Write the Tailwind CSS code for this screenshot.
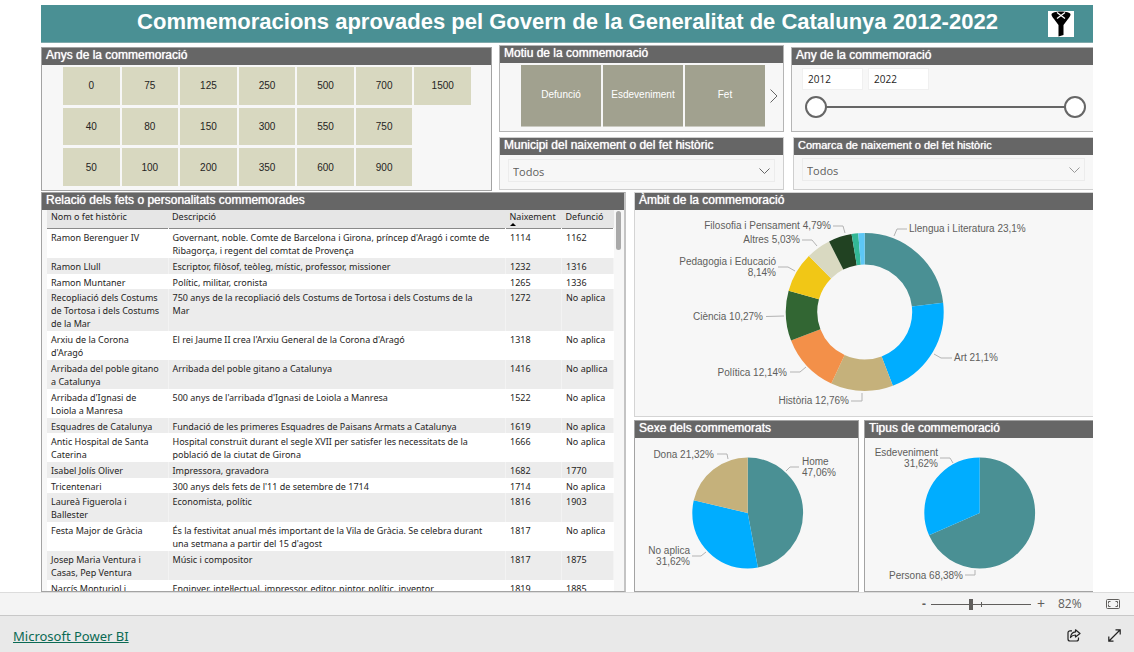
<!DOCTYPE html>
<html lang="ca">
<head>
<meta charset="utf-8">
<meta name="viewport" content="width=device-width, initial-scale=1">
<title>Commemoracions aprovades pel Govern de la Generalitat de Catalunya</title>
<script src="https://cdn.jsdelivr.net/npm/@tailwindcss/browser@4"></script>
</head>
<body class="bg-white font-['Liberation_Sans',Arial,sans-serif] text-[#252423]">
<div class="flex h-screen flex-col [&_h2]:[text-shadow:0_0_1px_#fff]">

  <main class="flex min-h-0 flex-1 flex-col px-[41px] pt-[5px]">
    <header class="flex h-[38px] shrink-0 items-center border-b border-[#7fa9ab] bg-[#4a9094] pr-[19px]">
      <h1 class="flex-1 pb-[3px] pl-[46px] text-center text-[22px] leading-[26px] font-bold whitespace-nowrap text-white">Commemoracions aprovades pel Govern de la Generalitat de Catalunya 2012-2022</h1>
      <button type="button" aria-label="Esborra els filtres" class="size-[26px] bg-white">
        <svg viewBox="0 0 26 26" class="size-full">
          <path d="M3.500 3.500C3.500 1.500 8 .5 13 .5s9.500 1 9.500 3c0 1.500-1 2.500-2.500 4.500l-4.500 6V24l-5 1.500V14L6 8C4.500 6 3.500 5 3.500 3.500Z" fill="#000"/>
          <path d="m9 1.500 8 6M17 1.500l-8 6" stroke="#fff" stroke-width="1.200"/>
        </svg>
      </button>
    </header>

    <div class="mt-[2px] grid shrink-0 grid-cols-[451fr_285fr_302fr] gap-x-[7px]">
      <section class="mt-[2px] flex h-[144px] flex-col border border-[#a3a3a3] bg-[#f7f7f7]">
        <h2 class="h-[17px] shrink-0 bg-[#666] pl-[4px] text-[12px] leading-[15px] text-white">Anys de la commemoració</h2>
        <div class="mt-[2px] mr-[20px] mb-[4px] ml-[21px] grid flex-1 grid-flow-col grid-cols-7 grid-rows-3 gap-x-[2px] gap-y-[3px] text-[10px] [&>button]:bg-[#d8d8c0]">
          <button type="button">0</button><button type="button">40</button><button type="button">50</button>
          <button type="button">75</button><button type="button">80</button><button type="button">100</button>
          <button type="button">125</button><button type="button">150</button><button type="button">200</button>
          <button type="button">250</button><button type="button">300</button><button type="button">350</button>
          <button type="button">500</button><button type="button">550</button><button type="button">600</button>
          <button type="button">700</button><button type="button">750</button><button type="button">900</button>
          <button type="button">1500</button>
        </div>
      </section>

      <div class="flex flex-col gap-[5px]">
        <section class="flex h-[87px] flex-col border border-[#b5b5b5] bg-[#f7f7f7]">
          <h2 class="h-[17px] shrink-0 bg-[#666] pl-[4px] text-[12px] leading-[15px] text-white">Motiu de la commemoració</h2>
          <div class="flex flex-1 items-stretch pt-[2px] pb-[4px] pl-[21px]">
            <div class="grid flex-1 grid-cols-3 gap-x-[2px] text-[10px] text-white [text-shadow:0_0_1px_#fff] [&>button]:border-b [&>button]:border-[#c9c9c0] [&>button]:bg-[#a1a18f] [&>button]:pb-[2px]">
              <button type="button">Defunció</button><button type="button">Esdeveniment</button><button type="button">Fet</button>
            </div>
            <button type="button" aria-label="Següent" class="flex w-[18px] items-center justify-center">
              <svg viewBox="0 0 8 14" class="h-[14px] w-[8px]" fill="none" stroke="#666"><path d="m.5.5 6.500 6.500-6.500 6.500"/></svg>
            </button>
          </div>
        </section>
        <section class="flex h-[53px] flex-col border border-[#cfcfcf] bg-[#f7f7f7]">
          <h2 class="h-[17px] shrink-0 bg-[#666] pl-[4px] text-[12px] leading-[15px] text-white"><label for="municipi">Municipi del naixement o del fet històric</label></h2>
          <div class="relative mt-[4px] mr-[8px] ml-[8px]">
            <select id="municipi" class="block h-[23px] w-full appearance-none border border-[#ececec] bg-[#f7f7f7] pt-[3px] pl-[4px] font-['Open_Sans','Noto_Sans',sans-serif] text-[11px] text-[#605e5c]"><option>Todos</option></select>
            <svg viewBox="0 0 11 6" class="pointer-events-none absolute top-[9px] right-[5px] h-[6px] w-[11px]" fill="none" stroke="#666"><path d="m.5.500 5 5 5-5"/></svg>
          </div>
        </section>
      </div>

      <div class="flex flex-col gap-[5px] pt-[2px]">
        <section class="flex h-[85px] flex-col border border-r-0 border-[#b5b5b5] bg-[#f7f7f7]">
          <h2 class="h-[17px] shrink-0 bg-[#666] pl-[4px] text-[12px] leading-[15px] text-white">Any de la commemoració</h2>
          <div class="flex gap-[5px] pt-[3px] pl-[10px] font-['Open_Sans','Noto_Sans',sans-serif] text-[10px]">
            <input type="text" aria-label="Any inicial" value="2012" class="h-[22px] w-[61px] border border-[#f0f0f0] bg-white pl-[5px]">
            <input type="text" aria-label="Any final" value="2022" class="h-[22px] w-[61px] border border-[#f0f0f0] bg-white pl-[5px]">
          </div>
          <div class="relative mt-[6px] mr-[7px] ml-[13px] h-[22px]">
            <div class="absolute inset-x-[11px] top-[10px] h-[2px] bg-[#666]"></div>
            <input type="range" min="2012" max="2022" value="2012" aria-label="Des de l'any" class="pointer-events-none absolute inset-0 h-[22px] w-full appearance-none bg-transparent [&::-webkit-slider-thumb]:pointer-events-auto [&::-webkit-slider-thumb]:size-[22px] [&::-webkit-slider-thumb]:appearance-none [&::-webkit-slider-thumb]:rounded-full [&::-webkit-slider-thumb]:border-2 [&::-webkit-slider-thumb]:border-[#666] [&::-webkit-slider-thumb]:bg-white">
            <input type="range" min="2012" max="2022" value="2022" aria-label="Fins a l'any" class="pointer-events-none absolute inset-0 h-[22px] w-full appearance-none bg-transparent [&::-webkit-slider-thumb]:pointer-events-auto [&::-webkit-slider-thumb]:size-[22px] [&::-webkit-slider-thumb]:appearance-none [&::-webkit-slider-thumb]:rounded-full [&::-webkit-slider-thumb]:border-2 [&::-webkit-slider-thumb]:border-[#666] [&::-webkit-slider-thumb]:bg-white">
          </div>
        </section>
        <section class="ml-[2px] flex h-[53px] flex-col border border-r-0 border-[#cfcfcf] bg-[#f7f7f7]">
          <h2 class="h-[17px] shrink-0 bg-[#666] pl-[4px] text-[11px] leading-[14px] text-white"><label for="comarca">Comarca de naixement o del fet històric</label></h2>
          <div class="relative mt-[3px] mr-[8px] ml-[8px]">
            <select id="comarca" class="block h-[23px] w-full appearance-none border border-[#ececec] bg-[#f7f7f7] pt-[3px] pl-[4px] font-['Open_Sans','Noto_Sans',sans-serif] text-[11px] text-[#605e5c]"><option>Todos</option></select>
            <svg viewBox="0 0 11 6" class="pointer-events-none absolute top-[9px] right-[5px] h-[6px] w-[11px]" fill="none" stroke="#999"><path d="m.5.500 5 5 5-5"/></svg>
          </div>
        </section>
      </div>
    </div>

    <div class="mt-px grid min-h-0 flex-1 grid-cols-[585fr_459fr] grid-rows-[minmax(0,1fr)] gap-x-[8px]">
      <section class="flex min-h-0 flex-col border border-r-2 border-[#a3a3a3] border-r-[#c4c4c4] bg-[#f7f7f7]">
        <h2 class="h-[17px] shrink-0 bg-[#666] pl-[4px] text-[12px] leading-[15px] text-white">Relació dels fets o personalitats commemorades</h2>
        <div class="flex min-h-0 flex-1 pl-[5px]">
          <div class="min-h-0 flex-1 overflow-hidden">
            <table class="w-full table-fixed border-collapse bg-white font-['Noto_Sans','Open_Sans',sans-serif] text-[9px] leading-[13px] whitespace-nowrap [&_td]:border-r [&_td]:border-white/40 [&_td]:px-[4px] [&_td]:pt-[2px] [&_td]:pb-px [&_td]:align-top">
              <colgroup><col class="w-[121px]"><col><col class="w-[56px]"><col class="w-[52px]"></colgroup>
              <thead>
                <tr class="h-[18px] border-b border-[#8a8a8a] bg-[#e6e6e6] text-left [&>th]:px-[4px] [&>th]:align-top [&>th]:font-normal">
                  <th>Nom o fet històric</th><th>Descripció</th>
                  <th><span class="block h-[13px]">Naixement</span><svg viewBox="0 0 6 3" class="h-[3px] w-[6px]"><path d="M0 3 3 0l3 3Z"/></svg></th>
                  <th>Defunció</th>
                </tr>
              </thead>
              <tbody class="[&>tr:nth-child(even)]:bg-[#ececec]">
                <tr><td>Ramon Berenguer IV</td><td>Governant, noble. Comte de Barcelona i Girona, príncep d'Aragó i comte de<br>Ribagorça, i regent del comtat de Provença</td><td>1114</td><td>1162</td></tr>
                <tr><td>Ramon Llull</td><td>Escriptor, filòsof, teòleg, místic, professor, missioner</td><td>1232</td><td>1316</td></tr>
                <tr class="[&>td]:pb-0!"><td>Ramon Muntaner</td><td>Polític, militar, cronista</td><td>1265</td><td>1336</td></tr>
                <tr><td>Recopliació dels Costums<br>de Tortosa i dels Costums<br>de la Mar</td><td>750 anys de la recopliació dels Costums de Tortosa i dels Costums de la<br>Mar</td><td>1272</td><td>No aplica</td></tr>
                <tr><td>Arxiu de la Corona<br>d'Aragó</td><td>El rei Jaume II crea l'Arxiu General de la Corona d'Aragó</td><td>1318</td><td>No aplica</td></tr>
                <tr><td>Arribada del poble gitano<br>a Catalunya</td><td>Arribada del poble gitano a Catalunya</td><td>1416</td><td>No apllica</td></tr>
                <tr><td>Arribada d'Ignasi de<br>Loiola a Manresa</td><td>500 anys de l'arribada d'Ignasi de Loiola a Manresa</td><td>1522</td><td>No aplica</td></tr>
                <tr class="[&>td]:pb-0!"><td>Esquadres de Catalunya</td><td>Fundació de les primeres Esquadres de Paisans Armats a Catalunya</td><td>1619</td><td>No aplica</td></tr>
                <tr><td>Antic Hospital de Santa<br>Caterina</td><td>Hospital construït durant el segle XVII per satisfer les necessitats de la<br>població de la ciutat de Girona</td><td>1666</td><td>No aplica</td></tr>
                <tr><td>Isabel Jolís Oliver</td><td>Impressora, gravadora</td><td>1682</td><td>1770</td></tr>
                <tr class="[&>td]:pb-0!"><td>Tricentenari</td><td>300 anys dels fets de l'11 de setembre de 1714</td><td>1714</td><td>No aplica</td></tr>
                <tr><td>Laureà Figuerola i<br>Ballester</td><td>Economista, polític</td><td>1816</td><td>1903</td></tr>
                <tr><td>Festa Major de Gràcia</td><td>És la festivitat anual més important de la Vila de Gràcia. Se celebra durant<br>una setmana a partir del 15 d'agost</td><td>1817</td><td>No aplica</td></tr>
                <tr><td>Josep Maria Ventura i<br>Casas, Pep Ventura</td><td>Músic i compositor</td><td>1817</td><td>1875</td></tr>
                <tr><td>Narcís Monturiol i</td><td>Enginyer, intel·lectual, impressor, editor, pintor, polític, inventor</td><td>1819</td><td>1885</td></tr>
              </tbody>
            </table>
          </div>
          <div class="w-[10px] shrink-0 pt-px pl-[2px]"><div class="h-[39px] w-[5px] rounded-full bg-[#a9a9a9]"></div></div>
        </div>
      </section>

      <div class="flex min-h-0 flex-col gap-[3px]">
        <section class="flex h-[225px] shrink-0 flex-col border border-r-0 border-[#d4d4d4] bg-[#f7f7f7]">
          <h2 class="h-[17px] shrink-0 bg-[#666] pl-[4px] text-[12px] leading-[15px] text-white">Àmbit de la commemoració</h2>
          <svg viewBox="0 0 458 206" class="min-h-0 w-full flex-1" role="img" aria-label="Àmbit de la commemoració">
            <g fill="none" stroke-width="31.500" transform="rotate(-90 229.700 102)">
              <circle cx="229.700" cy="102" r="63.250" pathLength="100" stroke="#4a9094" stroke-dasharray="23.100 76.900"/>
              <circle cx="229.700" cy="102" r="63.250" pathLength="100" stroke="#00adff" stroke-dasharray="21.100 78.900" stroke-dashoffset="-23.100"/>
              <circle cx="229.700" cy="102" r="63.250" pathLength="100" stroke="#c5b17b" stroke-dasharray="12.760 87.240" stroke-dashoffset="-44.200"/>
              <circle cx="229.700" cy="102" r="63.250" pathLength="100" stroke="#f39049" stroke-dasharray="12.140 87.860" stroke-dashoffset="-56.960"/>
              <circle cx="229.700" cy="102" r="63.250" pathLength="100" stroke="#326633" stroke-dasharray="10.270 89.730" stroke-dashoffset="-69.100"/>
              <circle cx="229.700" cy="102" r="63.250" pathLength="100" stroke="#f1c716" stroke-dasharray="8.140 91.860" stroke-dashoffset="-79.370"/>
              <circle cx="229.700" cy="102" r="63.250" pathLength="100" stroke="#d9d9c1" stroke-dasharray="5.030 94.970" stroke-dashoffset="-87.510"/>
              <circle cx="229.700" cy="102" r="63.250" pathLength="100" stroke="#214222" stroke-dasharray="4.790 95.210" stroke-dashoffset="-92.540"/>
              <circle cx="229.700" cy="102" r="63.250" pathLength="100" stroke="#33b795" stroke-dasharray="1.340 98.660" stroke-dashoffset="-97.330"/>
              <circle cx="229.700" cy="102" r="63.250" pathLength="100" stroke="#5cc7f5" stroke-dasharray="1.330 98.670" stroke-dashoffset="-98.670"/>
            </g>
            <g fill="none" stroke="#b3b3b3">
              <path d="m259 26 3-7h10"/><path d="m299 144 7 4h11"/><path d="M227 183v8h-11"/><path d="m171 157-6 5h-10"/>
              <path d="m149 106-18 .5"/><path d="m160 61-7-4h-10"/><path d="m182 36-5-6h-10"/><path d="m210 23-2-7h-10"/>
            </g>
            <g fill="#605e5c" class="text-[10px]">
              <text x="274" y="22">Llengua i Literatura 23,1%</text>
              <text x="319" y="151">Art 21,1%</text>
              <g text-anchor="end">
                <text x="214" y="194">Història 12,76%</text>
                <text x="152" y="166">Política 12,14%</text>
                <text x="128" y="110">Ciència 10,27%</text>
                <text x="141" y="55">Pedagogia i Educació</text>
                <text x="141" y="66">8,14%</text>
                <text x="165" y="33">Altres 5,03%</text>
                <text x="196" y="19">Filosofia i Pensament 4,79%</text>
              </g>
            </g>
          </svg>
        </section>

        <div class="grid min-h-0 flex-1 grid-cols-[225fr_229fr] gap-x-[5px]">
          <section class="flex min-h-0 flex-col border border-[#a3a3a3] bg-[#f7f7f7]">
            <h2 class="h-[17px] shrink-0 bg-[#666] pl-[4px] text-[12px] leading-[15px] text-white">Sexe dels commemorats</h2>
            <svg viewBox="0 0 223 153" class="min-h-0 w-full flex-1" role="img" aria-label="Sexe dels commemorats">
              <g fill="none" stroke-width="55.400" transform="rotate(-90 112.700 75)">
                <circle cx="112.700" cy="75" r="27.700" pathLength="100" stroke="#4a9094" stroke-dasharray="47.060 52.940"/>
                <circle cx="112.700" cy="75" r="27.700" pathLength="100" stroke="#00adff" stroke-dasharray="31.620 68.380" stroke-dashoffset="-47.060"/>
                <circle cx="112.700" cy="75" r="27.700" pathLength="100" stroke="#c5b17b" stroke-dasharray="21.320 78.680" stroke-dashoffset="-78.680"/>
              </g>
              <g fill="none" stroke="#b3b3b3"><path d="m151 33 4-4h9"/><path d="m71 114-5 4H57"/><path d="m93 21-1-5H82"/></g>
              <g fill="#605e5c" class="text-[10px]">
                <text x="167" y="27">Home</text><text x="167" y="38">47,06%</text>
                <g text-anchor="end">
                  <text x="79" y="20">Dona 21,32%</text>
                  <text x="55" y="116">No aplica</text><text x="55" y="127">31,62%</text>
                </g>
              </g>
            </svg>
          </section>
          <section class="flex min-h-0 flex-col border border-r-0 border-[#a3a3a3] bg-[#f7f7f7]">
            <h2 class="h-[17px] shrink-0 bg-[#666] pl-[4px] text-[12px] leading-[15px] text-white">Tipus de commemoració</h2>
            <svg viewBox="0 0 228 153" class="min-h-0 w-full flex-1" role="img" aria-label="Tipus de commemoració">
              <g fill="none" stroke-width="55.400" transform="rotate(-90 114.700 75)">
                <circle cx="114.700" cy="75" r="27.700" pathLength="100" stroke="#4a9094" stroke-dasharray="68.380 31.620"/>
                <circle cx="114.700" cy="75" r="27.700" pathLength="100" stroke="#00adff" stroke-dasharray="31.620 68.380" stroke-dashoffset="-68.380"/>
              </g>
              <g fill="none" stroke="#b3b3b3"><path d="m88 25-3-5H75"/><path d="M110 132v5h-10"/></g>
              <g fill="#605e5c" class="text-[10px]" text-anchor="end">
                <text x="73" y="18">Esdeveniment</text><text x="73" y="29">31,62%</text>
                <text x="98" y="141">Persona 68,38%</text>
              </g>
            </svg>
          </section>
        </div>
      </div>
    </div>
  </main>

  <div class="flex h-[23px] shrink-0 items-center justify-end border-t border-[#dcdcdc] bg-[#f4f4f4] pr-[14px] font-['Open_Sans','Noto_Sans',sans-serif] text-[#605e5c]">
    <button type="button" aria-label="Redueix" class="w-[14px] text-[12px] leading-[16px] font-bold">-</button>
    <div class="relative flex h-[11px] w-[100px] items-center">
      <div class="absolute inset-x-0 top-[5px] h-px bg-[#605e5c]"></div>
      <div class="absolute top-[3px] left-1/2 h-[5px] w-px bg-[#605e5c]"></div>
      <input type="range" min="0" max="100" value="40" aria-label="Zoom" class="relative h-[11px] w-full appearance-none bg-transparent [&::-webkit-slider-thumb]:h-[11px] [&::-webkit-slider-thumb]:w-[4px] [&::-webkit-slider-thumb]:appearance-none [&::-webkit-slider-thumb]:bg-[#605e5c]">
    </div>
    <button type="button" aria-label="Amplia" class="w-[20px] text-[14px] leading-[16px]">+</button>
    <span class="w-[38px] pl-[7px] text-[12px] leading-[16px]">82%</span>
    <button type="button" aria-label="Ajusta a la pàgina" class="ml-[17px]">
      <svg viewBox="0 0 14 10" class="h-[10px] w-[14px]" fill="none" stroke="#605e5c"><rect x=".5" y=".5" width="13" height="9" rx="1"/><path d="M4.500 2.500h-2v2M9.500 2.500h2v2M4.500 7.500h-2v-2M9.500 7.500h2v-2"/></svg>
    </button>
  </div>

  <footer class="flex h-[37px] shrink-0 items-center justify-between border-t border-[#c8c8c8] bg-[#e9e9e9] px-[13px] pt-[3px]">
    <a href="#" class="font-['Noto_Sans','Open_Sans',sans-serif] text-[13px] leading-[18px] text-[#0b6a54] underline">Microsoft Power BI</a>
    <div class="flex items-center gap-[27px]">
      <button type="button" aria-label="Comparteix">
        <svg viewBox="0 0 14 13" class="h-[13px] w-[14px]" fill="none" stroke="#222" stroke-width="1.200" stroke-linejoin="round"><path d="M5 1.800H3A2 2 0 0 0 1 3.800V10a2 2 0 0 0 2 2h6.500a2 2 0 0 0 2-2V8.500"/><path d="M8.500.8 13 4.500 8.500 8V6C6 6 4.700 6.800 3.500 8.500 3.800 5.500 5.500 3.200 8.500 2.900Z"/></svg>
      </button>
      <button type="button" aria-label="Pantalla completa">
        <svg viewBox="0 0 13 13" class="size-[13px]" fill="none" stroke="#222" stroke-width="1.200"><path d="M1 12 12 1M7.500.8h4.700v4.700M.8 7.500v4.700h4.700"/></svg>
      </button>
    </div>
  </footer>
</div>
</body>
</html>
